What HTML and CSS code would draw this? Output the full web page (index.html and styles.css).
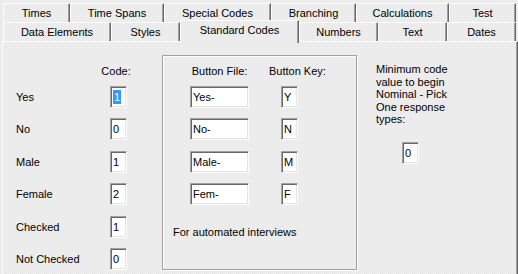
FILE: index.html
```html
<!DOCTYPE html>
<html lang="en">
<head>
  <meta charset="UTF-8">
  <title>Standard Codes</title>
  <link rel="stylesheet" href="styles.css">
</head>
<body>
  <div class="tabctl">
    <!-- back row -->
    <div class="tabrow top">
      <div class="tab">Times</div>
      <div class="tab">Time Spans</div>
      <div class="tab">Special Codes</div>
      <div class="tab">Branching</div>
      <div class="tab">Calculations</div>
      <div class="tab">Test</div>
    </div>
    <!-- front row -->
    <div class="tabrow front">
      <div class="tab">Data Elements</div>
      <div class="tab">Styles</div>
      <div class="tab sel">Standard Codes</div>
      <div class="tab">Numbers</div>
      <div class="tab">Text</div>
      <div class="tab">Dates</div>
    </div>

    <div class="panel">
      <div class="codes">
        <div class="head code-head">Code:</div>
        <div class="lbl">Yes</div><div class="edit"><span class="hl">1</span></div>
        <div class="lbl">No</div><div class="edit">0</div>
        <div class="lbl">Male</div><div class="edit">1</div>
        <div class="lbl">Female</div><div class="edit">2</div>
        <div class="lbl">Checked</div><div class="edit">1</div>
        <div class="lbl">Not Checked</div><div class="edit">0</div>
      </div>

      <div class="group">
        <div class="head file-head">Button File:</div>
        <div class="head key-head">Button Key:</div>
        <div class="edit">Yes-</div><div class="edit">Y</div>
        <div class="edit">No-</div><div class="edit">N</div>
        <div class="edit">Male-</div><div class="edit">M</div>
        <div class="edit">Fem-</div><div class="edit">F</div>
        <div class="note">For automated interviews</div>
      </div>

      <div class="minimum">
        <p>Minimum code value to begin Nominal - Pick One response types:</p>
        <div class="edit">0</div>
      </div>
    </div>
  </div>
</body>
</html>
```

FILE: styles.css
```css
* {
  box-sizing: border-box;
}

body {
  margin: 0;
  font-family: "Liberation Sans", Arial, sans-serif;
  font-size: 11px;
  color: #000;
  background: repeating-conic-gradient(#f3f3f3 0 25%, #e5e5e5 0 50%) 0 0 / 2px 2px;
  height: 274px;
  overflow: hidden;
}

.tabctl {
  padding-top: 3px;
}

.tabrow {
  display: flex;
  margin-left: 3px;
  height: 19px;
  align-items: flex-end;
}

.tab {
  height: 19px;
  display: flex;
  align-items: center;
  justify-content: center;
  white-space: nowrap;
  border-top: 1px solid #fff;
  border-left: 1px solid #fff;
  border-right: 1px solid #696969;
  box-shadow: inset -1px 0 #a0a0a0;
  padding-bottom: 1px;
}

.top .tab:nth-child(1) { width: 67px; }
.top .tab:nth-child(2) { width: 94px; }
.top .tab:nth-child(3) { width: 107px; }
.top .tab:nth-child(4) { width: 85px; }
.top .tab:nth-child(5) { width: 93px; }
.top .tab:nth-child(6) { width: 67px; }

.front .tab:nth-child(1) { width: 108px; }
.front .tab:nth-child(2) { width: 69px; }
.front .tab:nth-child(3) { width: 119px; }
.front .tab:nth-child(4) { width: 79px; }
.front .tab:nth-child(5) { width: 69px; }
.front .tab:nth-child(6) { width: 69px; }

.tab.sel {
  height: 23px;
  margin-bottom: -2px;
  padding-bottom: 5px;
  position: relative;
  z-index: 1;
  background: repeating-conic-gradient(#f3f3f3 0 25%, #e5e5e5 0 50%) 0 0 / 2px 2px;
}

.panel {
  margin-left: 2px;
  width: 516px;
  height: 240px;
  border-top: 1px solid #fff;
  border-left: 1px solid #fff;
  border-right: 1px solid #696969;
  box-shadow: inset -1px 0 #a0a0a0;
  display: flex;
  align-items: flex-start;
}

.edit {
  height: 22px;
  background: #fff;
  border-top: 1px solid #a0a0a0;
  border-left: 1px solid #a0a0a0;
  border-right: 1px solid #fff;
  border-bottom: 1px solid #fff;
  box-shadow: inset 1px 1px #696969, inset -1px -1px #e3e3e3;
  padding: 3px 0 0 2px;
  line-height: 14px;
  white-space: nowrap;
}

.hl {
  background: #3399ff;
  color: #fff;
  display: inline-block;
  padding: 0 1px;
}

.head {
  line-height: 13px;
  height: 13px;
  white-space: nowrap;
}

.codes {
  display: grid;
  grid-template-columns: 94px 17px;
  grid-template-rows: 11px;
  grid-auto-rows: 22px;
  row-gap: 10.4px;
  padding: 22.6px 0 0 13px;
  width: 159px;
}

.code-head {
  grid-column: 2;
  justify-self: center;
  margin-left: -5px;
}

.code-head + .lbl {
  grid-row: 2;
}

.lbl {
  display: flex;
  align-items: center;
  white-space: nowrap;
}

.group {
  margin-top: 13px;
  width: 195px;
  height: 215px;
  border: 1px solid #a0a0a0;
  box-shadow: 1px 1px #fff, inset 1px 1px #fff;
  display: grid;
  grid-template-columns: 59px 17px;
  grid-template-rows: 11px;
  grid-auto-rows: 22px;
  column-gap: 32px;
  row-gap: 10.4px;
  align-content: start;
  padding: 8.5px 0 0 27px;
}

.file-head {
  justify-self: center;
}

.key-head {
  justify-self: start;
  margin-left: -12px;
}

.note {
  grid-column: 1 / 3;
  margin: 11px 0 0 -17px;
  white-space: nowrap;
  line-height: 13px;
}

.minimum {
  margin: 21px 0 0 19px;
  width: 74px;
}

.minimum p {
  margin: 0;
  line-height: 12.6px;
}

.minimum .edit {
  width: 17px;
  margin: 16px 0 0 26px;
}
```
